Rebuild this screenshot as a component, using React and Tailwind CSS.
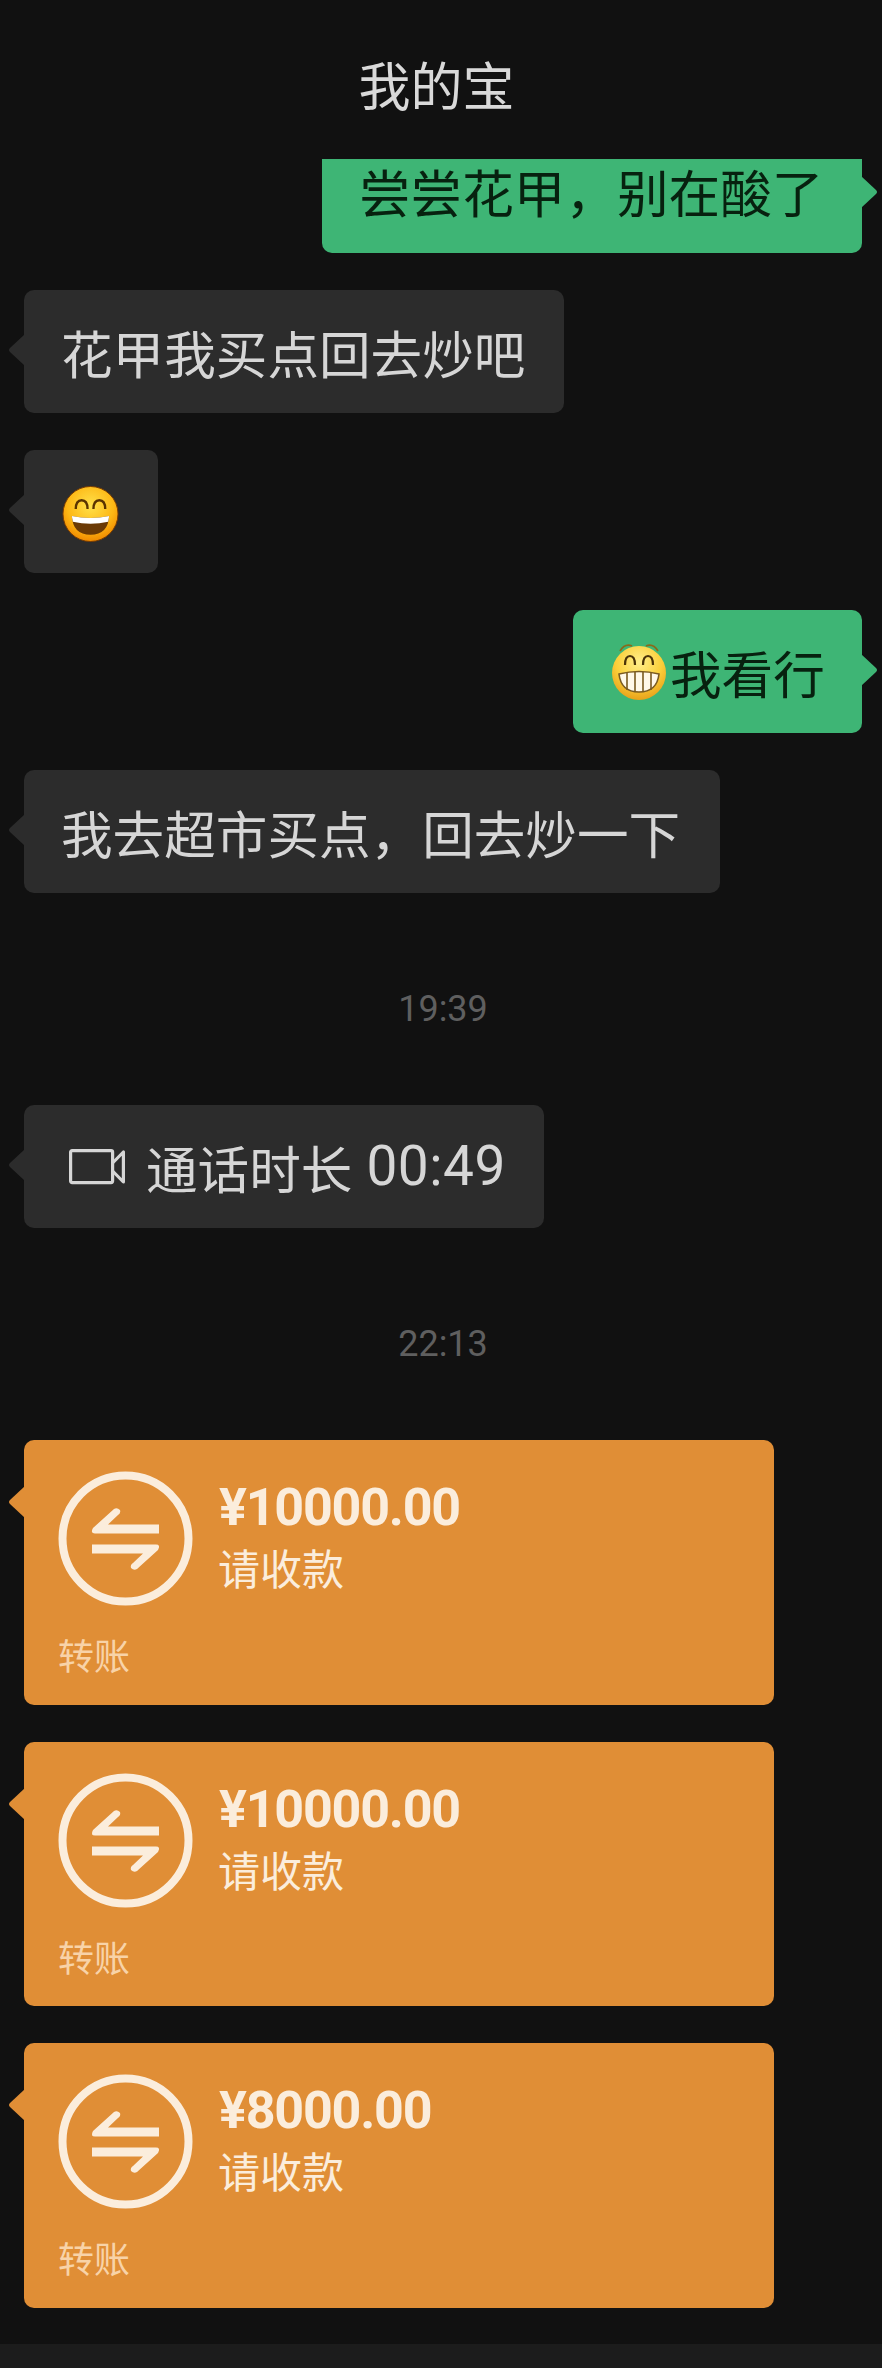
const CJK = "font-['Noto_Sans_CJK_SC','Noto_Sans',sans-serif]"

const Tail = ({ side, color, className }) => (
  <svg
    width="18"
    height="36"
    viewBox="0 0 18 36"
    className={`absolute ${side === 'left' ? '-left-[17px]' : '-right-[17px] rotate-180'} ${className}`}
  >
    <path d="M18 2 L3 16 Q1 18 3 20 L18 34 Z" fill={color} />
  </svg>
)

const SmileEmoji = () => (
  <svg width="57" height="58" viewBox="0 0 58 58">
    <defs>
      <radialGradient id="smile" cx="50%" cy="35%" r="65%">
        <stop offset="0%" stopColor="#ffe14a" />
        <stop offset="65%" stopColor="#fdb714" />
        <stop offset="100%" stopColor="#f08a00" />
      </radialGradient>
    </defs>
    <circle cx="29" cy="29" r="28" fill="url(#smile)" stroke="#7a3c00" strokeWidth="1" />
    <path d="M14 24 Q14 15 20 15 Q26 15 26 24" fill="none" stroke="#5a3300" strokeWidth="2.4" />
    <path d="M32 24 Q32 15 38 15 Q44 15 44 24" fill="none" stroke="#5a3300" strokeWidth="2.4" />
    <path d="M10 31 Q29 35 48 31 Q47 50 29 50 Q11 50 10 31 Z" fill="#6b3a05" />
    <path d="M10 31 Q29 35 48 31 L47 37 Q29 41 11 37 Z" fill="#ffffff" />
  </svg>
)

const GrinEmoji = () => (
  <svg width="56" height="60" viewBox="0 0 56 60">
    <defs>
      <radialGradient id="grin" cx="50%" cy="30%" r="70%">
        <stop offset="0%" stopColor="#ffee8a" />
        <stop offset="60%" stopColor="#fbcf3a" />
        <stop offset="100%" stopColor="#e8a21a" />
      </radialGradient>
    </defs>
    <circle cx="28" cy="32" r="27" fill="url(#grin)" />
    <path d="M9 10 Q14 2 21 5" fill="none" stroke="#8a6a1a" strokeWidth="1.8" />
    <path d="M35 5 Q42 2 47 10" fill="none" stroke="#8a6a1a" strokeWidth="1.8" />
    <path d="M14 24 Q14 15 19 15 Q24 15 24 24" fill="none" stroke="#4a3208" strokeWidth="2.2" />
    <path d="M32 24 Q32 15 37 15 Q42 15 42 24" fill="none" stroke="#4a3208" strokeWidth="2.2" />
    <path d="M8 33 Q28 28 48 33 Q46 51 28 51 Q10 51 8 33 Z" fill="#fff8e8" stroke="#7a5a20" strokeWidth="1.6" />
    <path d="M16 32 V49 M24 31 V51 M32 31 V51 M40 32 V49" stroke="#7a5a20" strokeWidth="1.6" fill="none" />
  </svg>
)

const VideoIcon = () => (
  <svg width="56" height="36" viewBox="0 0 56 36" fill="none" stroke="#d6d6d6" strokeWidth="3.2" strokeLinejoin="round">
    <rect x="1.6" y="1.6" width="42" height="32" rx="1.5" />
    <path d="M43.6 14 L54.4 3 V33 L43.6 22" />
  </svg>
)

const harpoon = 'M101 53.5 V62.5 H37 Q32 62.5 35 57 L56 38 Q59 36 62 39 Q63 42 60 44 L50 53.5 Z'

const TransferIcon = () => (
  <svg width="135" height="135" viewBox="0 0 135 135" className="shrink-0">
    <circle cx="67.5" cy="67.5" r="63" fill="none" stroke="#fbeddc" strokeWidth="8" />
    <path d={harpoon} fill="#fbeddc" />
    <path d={harpoon} fill="#fbeddc" transform="rotate(180 67.5 68)" />
  </svg>
)

const Bubble = ({ mine, width, children }) => (
  <div
    className={`relative flex h-[123px] items-center rounded-[10px] ${width} ${
      mine ? 'self-end bg-[#3eb575] text-[#07210f]' : 'self-start bg-[#2c2c2c] text-[#d6d6d6]'
    } text-[51.6px] leading-none`}
  >
    <Tail side={mine ? 'right' : 'left'} color={mine ? '#3eb575' : '#2c2c2c'} className="top-[42px]" />
    {children}
  </div>
)

const TimeLabel = ({ children }) => (
  <div className="flex h-[212px] items-center justify-center pt-[20px] font-['Roboto',sans-serif] text-[36px] leading-none text-[#5f5f5f]">
    {children}
  </div>
)

const TransferCard = ({ amount }) => (
  <div className="relative flex h-[264.5px] w-[750px] flex-col rounded-[10px] bg-[#e08e36] pl-[34px] pt-[31px] text-[#fbeddc]">
    <Tail side="left" color="#e08e36" className="top-[44px]" />
    <div className="flex">
      <TransferIcon />
      <div className="ml-[26px] flex flex-col">
        <span className="mt-[10px] font-['Roboto',sans-serif] text-[52px] font-bold leading-[54px] tracking-[-1.2px]">{amount}</span>
        <span className="-ml-[1px] mt-[7px] text-[42px] leading-[50px]">请收款</span>
      </div>
    </div>
    <span className="mt-[26px] text-[36px] leading-[44px] text-[#f8d3a8]">转账</span>
  </div>
)

export default function App() {
  return (
    <div className={`flex h-[2368px] w-[882px] flex-col overflow-hidden bg-[#111111] ${CJK}`}>
      <div className="flex h-[159px] shrink-0 justify-center pr-[9px] pt-[58px] text-[52px] leading-none text-[#d9d9d9]">
        我的宝
      </div>

      <div className="flex flex-1 flex-col pl-[24px] pr-[20px]">
        <div className="relative flex h-[94px] w-[540px] items-center self-end rounded-b-[10px] bg-[#3eb575] pb-[30px] pl-[37px] text-[51.6px] leading-none text-[#07210f]">
          <Tail side="right" color="#3eb575" className="top-[15px]" />
          尝尝花甲，别在酸了
        </div>

        <div className="mt-[37px] flex flex-col gap-[37px]">
          <Bubble width="w-[540px]">
            <span className="pl-[37px]">花甲我买点回去炒吧</span>
          </Bubble>
          <Bubble width="w-[134px]">
            <span className="mt-[4px] pl-[38px]">
              <SmileEmoji />
            </span>
          </Bubble>
          <Bubble mine width="w-[289px]">
            <span className="flex items-center pl-[38px]">
              <span className="-mt-[2px] mr-[3px]">
                <GrinEmoji />
              </span>
              我看行
            </span>
          </Bubble>
          <Bubble width="w-[696px]">
            <span className="pl-[37px]">我去超市买点，回去炒一下</span>
          </Bubble>
        </div>

        <TimeLabel>19:39</TimeLabel>

        <Bubble width="w-[520px]">
          <span className="flex items-center pl-[45px]">
            <VideoIcon />
            <span className="ml-[21px]">通话时长</span>
            <span className="ml-[14px] font-['Roboto',sans-serif] text-[55px] tracking-[0.5px]">00:49</span>
          </span>
        </Bubble>

        <TimeLabel>22:13</TimeLabel>

        <div className="flex flex-col gap-[37px]">
          <TransferCard amount="¥10000.00" />
          <TransferCard amount="¥10000.00" />
          <TransferCard amount="¥8000.00" />
        </div>
      </div>

      <div className="h-[24px] shrink-0 bg-[#1c1c1c]" />
    </div>
  )
}
